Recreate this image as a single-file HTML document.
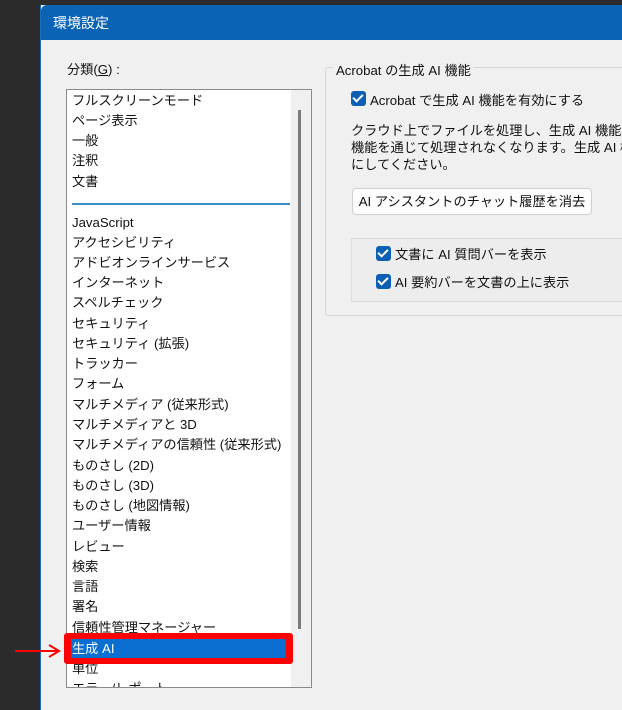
<!DOCTYPE html>
<html><head><meta charset="utf-8"><style>
*{margin:0;padding:0;box-sizing:border-box}
body{width:622px;height:710px;overflow:hidden;background:#2b2b2b;font-family:"Liberation Sans","Noto Sans CJK JP",sans-serif;font-size:13.2px;color:#111;position:relative}
.dlg{position:absolute;left:40px;top:5px;width:582px;height:705px;background:#f0f0f0;border-left:1px solid #1a6fc0}
.tb{position:absolute;left:0;top:0;right:0;height:35px;background:#0b63b6;color:#fff;font-size:14px;padding:8px 12px;border-top-left-radius:6px}
.a{position:absolute;white-space:nowrap}
.list{position:absolute;left:66px;top:89px;width:246px;height:599px;background:#fff;border:1px solid #8a8a8a;overflow:hidden}
.it{position:absolute;left:5px;line-height:20px;white-space:nowrap}
.cb{position:absolute;width:15px;height:15px;background:#0c5fb3;border-radius:3px}
.cb::after{content:"";position:absolute;left:4px;top:1px;width:4px;height:8px;border:solid #fff;border-width:0 2px 2px 0;transform:rotate(45deg)}
.clip{position:absolute;left:0;top:0;width:622px;height:710px;overflow:hidden}
</style></head><body><div class="clip">
<div class="dlg"><div class="tb">環境設定</div></div>
<div class="a" style="left:67px;top:59px">分類(<u>G</u>) :</div>
<div class="list">
<div style="position:absolute;left:224px;top:0;width:20px;height:597px;background:#f0f0f0"></div>
<div style="position:absolute;left:231px;top:20px;width:3px;height:519px;background:#7a7a7a"></div>
<div style="position:absolute;left:5px;top:113px;width:218px;height:2px;background:#3a8ec8"></div>
<div class="it" style="top:1px">フルスクリーンモード</div>
<div class="it" style="top:21px">ページ表示</div>
<div class="it" style="top:41px">一般</div>
<div class="it" style="top:61px">注釈</div>
<div class="it" style="top:82px">文書</div>
<div class="it" style="top:123px">JavaScript</div>
<div class="it" style="top:143px">アクセシビリティ</div>
<div class="it" style="top:163px">アドビオンラインサービス</div>
<div class="it" style="top:183px">インターネット</div>
<div class="it" style="top:203px">スペルチェック</div>
<div class="it" style="top:224px">セキュリティ</div>
<div class="it" style="top:244px">セキュリティ (拡張)</div>
<div class="it" style="top:264px">トラッカー</div>
<div class="it" style="top:284px">フォーム</div>
<div class="it" style="top:305px">マルチメディア (従来形式)</div>
<div class="it" style="top:325px">マルチメディアと 3D</div>
<div class="it" style="top:345px">マルチメディアの信頼性 (従来形式)</div>
<div class="it" style="top:366px">ものさし (2D)</div>
<div class="it" style="top:386px">ものさし (3D)</div>
<div class="it" style="top:406px">ものさし (地図情報)</div>
<div class="it" style="top:426px">ユーザー情報</div>
<div class="it" style="top:447px">レビュー</div>
<div class="it" style="top:467px">検索</div>
<div class="it" style="top:487px">言語</div>
<div class="it" style="top:507px">署名</div>
<div class="it" style="top:528px">信頼性管理マネージャー</div>
<div class="it" style="top:569px">単位</div>
<div class="it" style="top:589px">エラー/レポート</div>
</div>
<div class="a" style="left:64px;top:633px;width:229px;height:31px;border:4px solid #f00;border-radius:3px;background:#f00"></div>
<div class="a" style="left:71px;top:639px;width:215px;height:19px;background:#0a6fd0;color:#fff;padding-left:1px;line-height:19px">生成 AI</div>
<svg class="a" style="left:13px;top:643px" width="48" height="16"><path d="M2 8H45M36 2L46 8L36 14" stroke="#f00" stroke-width="2" fill="none"/></svg>
<div class="a" style="left:325px;top:67px;width:300px;height:249px;border:1px solid #d5d5d5;border-radius:3px"></div>
<div class="a" style="left:333px;top:60px;background:#f0f0f0;padding:0 3px">Acrobat の生成 AI 機能</div>
<div class="cb" style="left:351px;top:91px"></div>
<div class="a" style="left:370px;top:90px">Acrobat で生成 AI 機能を有効にする</div>
<div class="a" style="left:351px;top:122px;line-height:17px">クラウド上でファイルを処理し、生成 AI 機能を拡<br>機能を通じて処理されなくなります。生成 AI 機<br>にしてください。</div>
<div class="a" style="left:352px;top:188px;width:240px;height:27px;background:#fdfdfd;border:1px solid #d0d0d0;border-radius:4px;text-align:center;line-height:25px">AI アシスタントのチャット履歴を消去</div>
<div class="a" style="left:351px;top:238px;width:280px;height:64px;border:1px solid #dcdcdc;background:#ededed"></div>
<div class="cb" style="left:376px;top:246px"></div>
<div class="a" style="left:395px;top:244px">文書に AI 質問バーを表示</div>
<div class="cb" style="left:376px;top:274px"></div>
<div class="a" style="left:395px;top:272px">AI 要約バーを文書の上に表示</div>
</div></body></html>
